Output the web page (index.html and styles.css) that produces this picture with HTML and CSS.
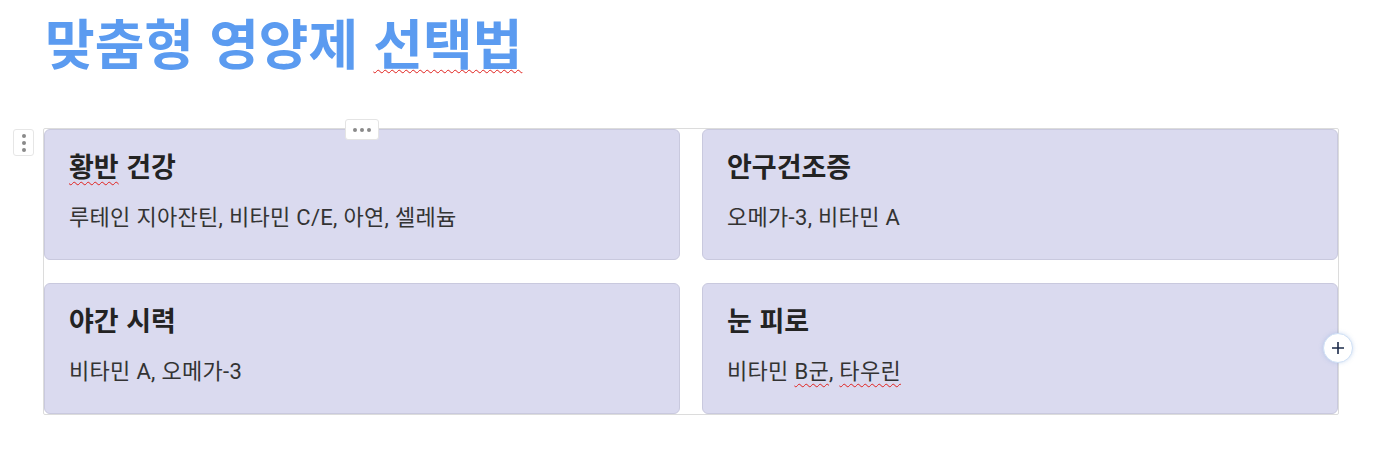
FILE: index.html
```html
<!DOCTYPE html>
<html lang="ko">
<head>
<meta charset="utf-8">
<link rel="stylesheet" href="styles.css">
</head>
<body>
<div class="page">
  <h1 class="title">맞춤형 영양제 <span class="spell">선택법</span></h1>
  <div class="block">
    <button class="handle" aria-label="drag"><span></span><span></span><span></span></button>
    <button class="more" aria-label="more"><span></span><span></span><span></span></button>
    <div class="grid">
      <div class="card">
        <h3 class="card-title"><span class="spell">황반</span> 건강</h3>
        <p class="card-text">루테인 지아잔틴, 비타민 C/E, 아연, 셀레늄</p>
      </div>
      <div class="card">
        <h3 class="card-title">안구건조증</h3>
        <p class="card-text">오메가-3, 비타민 A</p>
      </div>
      <div class="card">
        <h3 class="card-title">야간 시력</h3>
        <p class="card-text">비타민 A, 오메가-3</p>
      </div>
      <div class="card">
        <h3 class="card-title">눈 피로</h3>
        <p class="card-text">비타민 <span class="spell">B군</span>, <span class="spell">타우린</span></p>
      </div>
    </div>
    <button class="add" aria-label="add">
      <svg width="14" height="14" viewBox="0 0 14 14"><path d="M7 1v12M1 7h12" stroke="#1c2b4a" stroke-width="1.6" fill="none"/></svg>
    </button>
  </div>
</div>
</body>
</html>
```

FILE: styles.css
```css
* { box-sizing: border-box; }
html, body { margin: 0; padding: 0; background: #fff; }
body {
  font-family: "Noto Sans CJK KR", "Noto Sans", sans-serif;
  color: #2b2b2b;
}
.page {
  padding: 5px 40px 0 43px;
}
.title {
  margin: 0 0 0 2px;
  font-size: 54px;
  line-height: 74px;
  font-weight: 700;
  color: #5b9bf0;
  letter-spacing: 0;
}
.spell {
  text-decoration: underline wavy #e0201c;
  text-decoration-thickness: 1px;
  text-underline-offset: 4px;
}
.block {
  position: relative;
  margin-top: 49px;
  width: 1296px;
}
.grid {
  border: 1px solid #dcdcdc;
  border-radius: 2px;
  display: grid;
  grid-template-columns: 1fr 1fr;
  column-gap: 22px;
  row-gap: 23px;
  height: 287px;
  align-content: start;
}
.card {
  background: #dadaef;
  border: 1px solid #c9c9de;
  border-radius: 6px;
  height: 131px;
  padding: 18px 24px 0 24px;
}
.card-title {
  margin: 0;
  font-size: 27px;
  line-height: 36px;
  font-weight: 700;
  color: #232323;
  letter-spacing: 0;
}
.card-text {
  margin: 19px 0 0;
  font-family: Roboto, "Noto Sans CJK KR", sans-serif;
  font-size: 22px;
  line-height: 30px;
  font-weight: 400;
  color: #333;
  letter-spacing: 0.3px;
}
.handle {
  position: absolute;
  left: -30px;
  top: 1px;
  width: 21px;
  height: 27px;
  background: #fff;
  border: 1px solid #e6e6e6;
  border-radius: 3px;
  padding: 0;
  display: flex;
  flex-direction: column;
  align-items: center;
  justify-content: center;
  gap: 3px;
}
.handle span, .more span {
  width: 4px;
  height: 4px;
  border-radius: 50%;
  background: #8a8a8a;
}
.more {
  position: absolute;
  left: 302px;
  top: -9px;
  width: 34px;
  height: 21px;
  background: #fff;
  border: 1px solid #e4e4e4;
  border-radius: 3px;
  padding: 0;
  display: flex;
  align-items: center;
  justify-content: center;
  gap: 3px;
  z-index: 2;
}
.add {
  position: absolute;
  left: 1280px;
  top: 205px;
  width: 30px;
  height: 30px;
  border-radius: 50%;
  background: #fff;
  border: 1px solid #cfe0f5;
  box-shadow: 0 0 4px rgba(120, 160, 220, 0.35);
  padding: 0;
  display: flex;
  align-items: center;
  justify-content: center;
  z-index: 2;
}
```
